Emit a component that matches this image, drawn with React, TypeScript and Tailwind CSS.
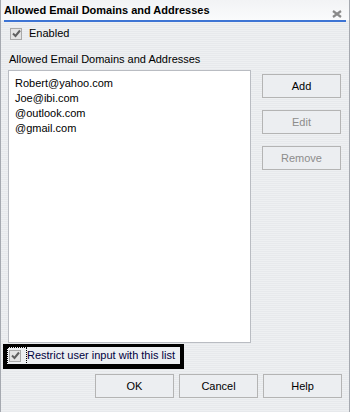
import { useState } from "react";

const font = { fontFamily: '"Liberation Sans", Arial, sans-serif' };

function CheckBox({ checked, focus }: { checked: boolean; focus?: boolean }) {
  const box = (
    <span className="flex h-[12px] w-[12px] items-center justify-center border border-[#a9a9a9] bg-[#e3e3e3]">
      {checked && (
        <svg width="9" height="9" viewBox="0 0 9 9">
          <path d="M1 4.5 L3.5 7 L8 1.5" fill="none" stroke="#5f5f5f" strokeWidth="2" />
        </svg>
      )}
    </span>
  );
  if (!focus) return box;
  return <span className="flex border border-dotted border-black py-[2px] pl-[1px] pr-[5px]">{box}</span>;
}

function DlgButton({ label, disabled }: { label: string; disabled?: boolean }) {
  return (
    <button
      className={`h-[24px] w-[79px] border border-[#b4b4b4] bg-[#eceef1] text-[11px] ${disabled ? "text-[#8c8c8c]" : "text-black"}`}
      style={font}
    >
      {label}
    </button>
  );
}

export default function App() {
  const [items] = useState(["Robert@yahoo.com", "Joe@ibi.com", "@outlook.com", "@gmail.com"]);

  return (
    <div
      className="flex h-[412px] w-[350px] flex-col border-x border-[#a5a9b0] bg-[repeating-linear-gradient(180deg,#eef0f2_0px,#eef0f2_1px,#e7e9ec_1px,#e7e9ec_2px)] text-[11px] leading-[13px] text-black"
      style={font}
    >
      <div className="flex h-[20px] items-center justify-between bg-[linear-gradient(180deg,#f2f3f5,#fafbfc)] pl-[3px] pr-[7px]">
        <span className="text-[11px] font-bold">Allowed Email Domains and Addresses</span>
        <svg width="10" height="8" viewBox="0 0 10 8" className="mt-[7px]">
          <path d="M1 1 L9 7 M9 1 L1 7" stroke="#8a8a8a" strokeWidth="2.2" />
        </svg>
      </div>
      <div className="mx-[3px] h-[2px] bg-[#3d74d4]" />

      <div className="flex items-center gap-[7px] pl-[9px] pt-[5px]">
        <CheckBox checked />
        <span>Enabled</span>
      </div>

      <div className="pl-[8px] pt-[13px]">Allowed Email Domains and Addresses</div>

      <div className="flex gap-[11px] pl-[7px] pt-[4px]">
        <div className="h-[273px] w-[243px] border border-[#b9bcc2] bg-white px-[6px] pt-[5px] leading-[15px]">
          {items.map((it) => (
            <div key={it}>{it}</div>
          ))}
        </div>
        <div className="flex flex-col gap-[12px] pt-[4px]">
          <DlgButton label="Add" />
          <DlgButton label="Edit" disabled />
          <DlgButton label="Remove" disabled />
        </div>
      </div>

      <div className="ml-[2px] mt-[1px] flex h-[25px] w-[181px] items-center border-x-4 border-b-[5px] border-t-[3px] border-black bg-[#eceef1] text-[#000040]">
        <CheckBox checked focus />
        <span className="whitespace-nowrap">Restrict user input with this list</span>
      </div>

      <div className="flex justify-end gap-[5px] pr-[7px] pt-[5px]">
        <DlgButton label="OK" />
        <DlgButton label="Cancel" />
        <DlgButton label="Help" />
      </div>
    </div>
  );
}
